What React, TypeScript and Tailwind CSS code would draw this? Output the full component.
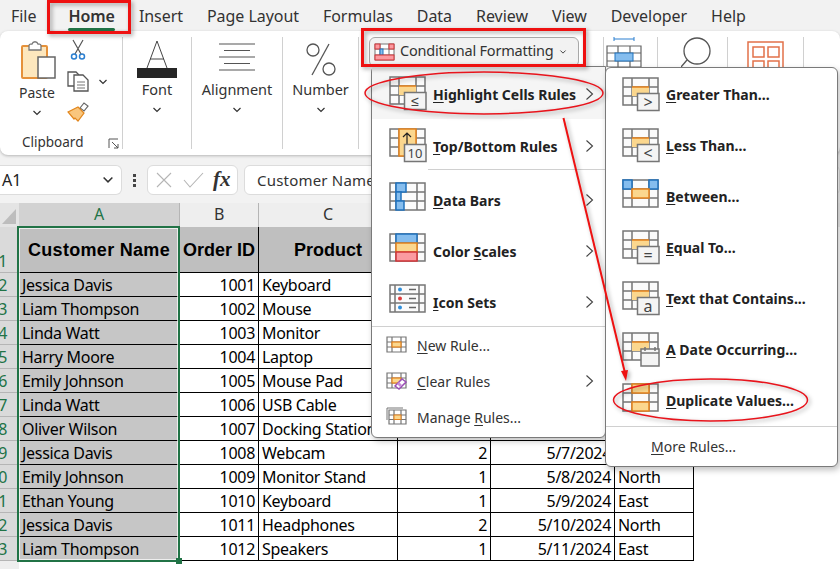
import * as React from "react";

const UI = "font-['Noto_Sans',sans-serif]";
const CELL = "font-['Noto_Sans',sans-serif] tracking-[-0.3px]";

const GREY = "#767676";
const OR_F = "#fbd78e";
const OR_S = "#e5821c";
const BL_F = "#85bdee";
const BL_S = "#1f72bd";
const RD_F = "#fb9aa0";
const RD_S = "#d13438";

const tabs = ["File", "Home", "Insert", "Page Layout", "Formulas", "Data", "Review", "View", "Developer", "Help"];

const rows = [
  ["Jessica Davis", "1001", "Keyboard", "", "", ""],
  ["Liam Thompson", "1002", "Mouse", "", "", ""],
  ["Linda Watt", "1003", "Monitor", "", "", ""],
  ["Harry Moore", "1004", "Laptop", "", "", ""],
  ["Emily Johnson", "1005", "Mouse Pad", "", "", ""],
  ["Linda Watt", "1006", "USB Cable", "", "", ""],
  ["Oliver Wilson", "1007", "Docking Station", "", "", ""],
  ["Jessica Davis", "1008", "Webcam", "2", "5/7/2024", ""],
  ["Emily Johnson", "1009", "Monitor Stand", "1", "5/8/2024", "North"],
  ["Ethan Young", "1010", "Keyboard", "1", "5/9/2024", "East"],
  ["Jessica Davis", "1011", "Headphones", "2", "5/10/2024", "North"],
  ["Liam Thompson", "1012", "Speakers", "1", "5/11/2024", "East"],
];

function Chevron({ className = "" }: { className?: string }) {
  return (
    <svg width="10" height="6" viewBox="0 0 10 6" className={className}>
      <path d="M1.5 1l3.5 3.5L8.500 1" fill="none" stroke="#333" strokeWidth="1.2" />
    </svg>
  );
}

function Arrow() {
  return (
    <svg width="9" height="14" viewBox="0 0 9 14" className="ml-auto shrink-0">
      <path d="M1.500 1.500L7.500 7l-6 5.500" fill="none" stroke="#444" strokeWidth="1.1" />
    </svg>
  );
}

// base 35x27 sheet grid used by every rule icon
function Lines({ a = 10, b = 27 }: { a?: number; b?: number }) {
  return (
    <path
      d={`M1 1h35v27H1zM${a} 1v27M${b} 1v27M1 10h35M1 19h35`}
      fill="#fbfbfb"
      stroke={GREY}
      strokeWidth="1.5"
    />
  );
}

function Cell({ x, y, w, h, fill, stroke }: { x: number; y: number; w: number; h: number; fill: string; stroke: string }) {
  return <rect x={x} y={y} width={w} height={h} fill={fill} stroke={stroke} strokeWidth="1.5" />;
}

function Mid() {
  return (
    <>
      <rect x="10" y="10" width="17" height="9" fill={OR_F} />
      <path d="M10 10h17" stroke={OR_S} strokeWidth="1.5" />
    </>
  );
}

function Box() {
  return <rect x="15.500" y="16.500" width="21.500" height="17" fill="#f4f4f4" stroke={GREY} strokeWidth="1.5" />;
}

function RuleIcon({ kind }: { kind: string }) {
  let body: React.ReactNode = null;
  const txt = (s: string, size = 14, y = 30) => (
    <text x="26" y={y} textAnchor="middle" fontSize={size} fontWeight="400" fill="#444" fontFamily="Noto Sans, sans-serif">
      {s}
    </text>
  );
  if (kind === "highlight") body = <><Lines /><Mid /><Box />{txt("≤", 14, 30)}</>;
  if (kind === "greater") body = <><Lines /><Mid /><Box />{txt(">", 16, 31)}</>;
  if (kind === "less") body = <><Lines /><Mid /><Box />{txt("<", 16, 31)}</>;
  if (kind === "equal") body = <><Lines /><Mid /><Box />{txt("=", 16, 31)}</>;
  if (kind === "text") body = <><Lines /><Mid /><Box />{txt("a", 16, 31)}</>;
  if (kind === "top")
    body = (
      <>
        <Lines />
        <Cell x={10} y={1} w={17} h={27} fill={OR_F} stroke={OR_S} />
        <path d="M18 17V5M14 9l4-4 4 4" fill="none" stroke="#222" strokeWidth="1.2" />
        <Box />
        {txt("10", 13, 30)}
      </>
    );
  if (kind === "bars")
    body = (
      <>
        <Lines a={7} b={28} />
        <Cell x={7} y={1} w={10} h={9} fill={BL_F} stroke={BL_S} />
        <Cell x={7} y={10} w={5} h={9} fill={BL_F} stroke={BL_S} />
        <Cell x={7} y={19} w={8} h={9} fill={BL_F} stroke={BL_S} />
      </>
    );
  if (kind === "color")
    body = (
      <>
        <Lines a={7} b={28} />
        <Cell x={7} y={1} w={21} h={9} fill={BL_F} stroke={BL_S} />
        <Cell x={7} y={10} w={21} h={9} fill={OR_F} stroke={OR_S} />
        <Cell x={7} y={19} w={21} h={9} fill={RD_F} stroke={RD_S} />
      </>
    );
  if (kind === "icons")
    body = (
      <>
        <Lines a={6} b={30} />
        <circle cx="11" cy="5.500" r="2" fill="#2f8fdc" />
        <circle cx="11" cy="14.500" r="2" fill="#e03b3b" />
        <circle cx="11" cy="23.500" r="2" fill="#2f8fdc" />
        <path d="M20 5.500h7M20 14.500h7M20 23.500h7" stroke="#666" strokeWidth="1.5" />
      </>
    );
  if (kind === "between")
    body = (
      <>
        <Lines />
        <Cell x={1} y={1} w={9} h={9} fill={BL_F} stroke={BL_S} />
        <Cell x={27} y={1} w={9} h={9} fill={BL_F} stroke={BL_S} />
        <Cell x={10} y={10} w={17} h={9} fill={OR_F} stroke={OR_S} />
      </>
    );
  if (kind === "date")
    body = (
      <>
        <Lines />
        <Mid />
        <rect x="19" y="17" width="18" height="17" fill="#f4f4f4" stroke={GREY} strokeWidth="1.5" />
        <path d="M19 21h18M23 15v4M33 15v4" fill="none" stroke={GREY} strokeWidth="1.5" />
      </>
    );
  if (kind === "dup")
    body = (
      <>
        <Lines />
        <Cell x={10} y={1} w={17} h={9} fill={OR_F} stroke={OR_S} />
        <Cell x={10} y={19} w={17} h={9} fill={OR_F} stroke={OR_S} />
      </>
    );
  return (
    <svg width="40" height="36" viewBox="0 0 40 36" className="shrink-0">
      {body}
    </svg>
  );
}

function SmallIcon({ kind }: { kind: string }) {
  return (
    <svg width="22" height="20" viewBox="0 0 22 20" className="shrink-0">
      {kind === "manage" && <path d="M1 13V1h16" fill="none" stroke={GREY} strokeWidth="1" />}
      <path
        d={kind === "manage" ? "M3 3h17v14H3zM8 3v14M15 3v14M3 8h17M3 12.500h17" : "M1 2h19v15H1zM6 2v15M15 2v15M1 7h19M1 12h19"}
        fill="none"
        stroke={GREY}
        strokeWidth="1.200"
      />
      {kind === "new" && <rect x="6" y="7" width="9" height="5" fill={OR_F} stroke={OR_S} strokeWidth="1.200" />}
      {kind === "manage" && <rect x="8" y="8" width="7" height="4.500" fill={OR_F} stroke={OR_S} />}
      {kind === "clear" && (
        <>
          <rect x="6" y="7" width="9" height="5" fill={OR_F} stroke={OR_S} strokeWidth="1.200" />
          <path d="M9 15l7-7 4 3-7 7z" fill="#fff" stroke="#9a4fb5" strokeWidth="1.500" />
          <path d="M11 13l3 3 2-2-3-3z" fill="#c58bd8" />
        </>
      )}
    </svg>
  );
}

function Key({ before = "", k, after }: { before?: string; k: string; after: string }) {
  return (
    <span>
      {before}
      <span className="underline underline-offset-2">{k}</span>
      {after}
    </span>
  );
}

function RibbonLabel({ children }: { children: React.ReactNode }) {
  return (
    <div className="-mt-[1px] flex flex-col items-center gap-[8px] text-[14.500px] leading-[20px] text-[#333]">
      <span>{children}</span>
      <Chevron />
    </div>
  );
}

function Ribbon() {
  return (
    <div className="flex h-[124px] rounded-lg bg-white py-[6px] shadow-[0_1px_3px_rgba(0,0,0,0.25)]">
      <div className="relative flex w-[123px] shrink-0 border-r border-[#d0d0d0]">
        <div className="ml-[18px] flex w-[38px] flex-col items-center">
          <svg width="38" height="40" viewBox="0 0 38 40" className="mt-[3px]">
            <rect x="4" y="6" width="25" height="32" rx="1" fill="#fde7bd" stroke="#e5913a" strokeWidth="2" />
            <path d="M11 6c0-2 1-2 3-2 1-3 5-3 6 0 2 0 3 0 3 2v4H11z" fill="#fff" stroke="#777" strokeWidth="1.300" />
            <rect x="20" y="17" width="17" height="21" fill="#fff" stroke="#666" strokeWidth="1.500" />
          </svg>
          <div className="mt-[3px] flex flex-col items-center gap-[7px] text-[14px] leading-[20px] text-[#333]">
            <span>Paste</span>
            <Chevron />
          </div>
        </div>
        <div className="ml-[11px] flex flex-col">
          <svg width="20" height="22" viewBox="0 0 20 22" className="ml-[1px] mt-[2px]">
            <path d="M5 1l8 14M15 1L7 15" stroke="#555" strokeWidth="1.200" />
            <circle cx="6" cy="17.500" r="2.500" fill="none" stroke="#2b7fd0" strokeWidth="1.500" />
            <circle cx="14" cy="17.500" r="2.500" fill="none" stroke="#2b7fd0" strokeWidth="1.500" />
          </svg>
          <div className="mt-[10px] flex items-center">
            <svg width="22" height="21" viewBox="0 0 22 21">
              <path d="M7 15H1V1h8l3 3" fill="#fff" stroke="#555" strokeWidth="1.300" />
              <path d="M7 4h9l5 5v11H7z" fill="#fff" stroke="#555" strokeWidth="1.300" />
              <path d="M10 11h8M10 14h8M10 17h8" stroke="#777" />
            </svg>
            <Chevron className="ml-[9px]" />
          </div>
          <svg width="22" height="20" viewBox="0 0 22 20" className="mt-[10px]">
            <path d="M13 6l4-5 4 3-4 5z" fill="#fff" stroke="#666" strokeWidth="1.200" />
            <path d="M1 10l10-5 6 6-6 8-3-3-1 1z" fill="#f9c67d" stroke="#e2861c" strokeWidth="1.200" />
          </svg>
        </div>
        <span className="absolute bottom-[-2px] left-[22px] text-[13.500px] leading-[18px] text-[#333]">Clipboard</span>
        <svg width="11" height="11" viewBox="0 0 11 11" className="absolute bottom-0 right-[3px]">
          <path d="M1 10V1h9M4 4l6 6M10 6v4H6" fill="none" stroke="#555" />
        </svg>
      </div>

      <div className="flex w-[69px] shrink-0 flex-col items-center border-r border-[#d0d0d0]">
        <svg width="40" height="41" viewBox="0 0 40 41" className="mt-[2px]">
          <path d="M10 29L20 2l10 27M13 20h14" fill="none" stroke="#444" strokeWidth="1" />
          <rect x="0" y="29" width="40" height="10" fill="#262626" />
        </svg>
        <RibbonLabel>Font</RibbonLabel>
      </div>

      <div className="flex w-[91px] shrink-0 flex-col items-center border-r border-[#d0d0d0]">
        <svg width="36" height="41" viewBox="0 0 36 41" className="mt-[2px]">
          <path d="M0 5h36M5 11.500h26M0 18h36M5 24.500h26M0 31h36" stroke="#555" strokeWidth="1.200" />
        </svg>
        <RibbonLabel>Alignment</RibbonLabel>
      </div>

      <div className="flex w-[76px] shrink-0 flex-col items-center border-r border-[#d0d0d0]">
        <svg width="32" height="41" viewBox="0 0 32 41" className="mt-[2px]">
          <circle cx="8" cy="11" r="6" fill="none" stroke="#555" strokeWidth="1.300" />
          <circle cx="24" cy="30" r="6" fill="none" stroke="#555" strokeWidth="1.300" />
          <path d="M24 5L7 36" stroke="#555" strokeWidth="1.300" />
        </svg>
        <RibbonLabel>Number</RibbonLabel>
      </div>

      <div className="w-[245px] shrink-0 border-r border-[#d0d0d0] pl-[10px]">
        <div className="flex h-[30px] w-[210px] items-center rounded-md border border-[#a8a8a8] bg-[#f2f2f2] pl-[4px]">
          <svg width="21" height="18" viewBox="0 0 21 18" className="shrink-0">
            <path d="M1 1h19v16H1zM6 1v16M15 1v16M1 6h19M1 12h19" fill="#fff" stroke="#777" />
            <rect x="1" y="1" width="5" height="5" fill={RD_F} stroke={RD_S} />
            <rect x="15" y="1" width="5" height="5" fill={RD_F} stroke={RD_S} />
            <rect x="6" y="6" width="3" height="6" fill={BL_F} stroke={BL_S} />
            <rect x="1" y="12" width="19" height="5" fill={RD_F} stroke={RD_S} />
          </svg>
          <span className="ml-[5px] -mt-[2px] whitespace-nowrap text-[14.500px] tracking-[-0.2px] text-[#333]">Conditional Formatting</span>
          <Chevron className="ml-[4px] scale-75" />
        </div>
      </div>

      <div className="w-[54px] shrink-0 border-r border-[#d0d0d0] pl-[2px]">
        <svg width="36" height="30" viewBox="0 0 36 30">
          <path d="M8 2h20M8 0v4M28 0v4" stroke="#2b7fd0" fill="none" />
          <path d="M1 9h34v21H1zM12 9v21M24 9v21M1 16h34M1 24h34" fill="none" stroke="#666" strokeWidth="1.200" />
          <rect x="9" y="16" width="18" height="8" fill={BL_F} stroke={BL_S} />
        </svg>
      </div>

      <div className="w-[70px] shrink-0 border-r border-[#d0d0d0] pl-[23px]">
        <svg width="36" height="32" viewBox="0 0 36 32">
          <circle cx="16" cy="14" r="13" fill="#fff" stroke="#555" strokeWidth="1.300" />
          <path d="M6 23L0 30" stroke="#555" strokeWidth="1.300" />
        </svg>
      </div>

      <div className="w-[76px] shrink-0 border-r border-[#d0d0d0] pl-[19px]">
        <svg width="38" height="30" viewBox="0 0 38 30" className="mt-[4px]">
          <path d="M1 1h35v30H1zM6 6h11v10H6zM21 6h11v10H21zM6 20h11v12H6zM21 20h11v12H21z" fill="none" stroke="#e2714a" strokeWidth="1.500" />
        </svg>
      </div>
    </div>
  );
}

function FormulaBar() {
  return (
    <div className="mt-[10px] flex h-[30px] items-stretch">
      <div className="flex w-[122px] items-center rounded-r-md border border-l-0 border-[#dcdcdc] bg-white pl-[2px] pr-[8px] text-[16px] text-[#222]">
        A1
        <Chevron className="ml-auto scale-125" />
      </div>
      <div className="flex w-[25px] flex-col items-center justify-center gap-[2px]">
        <i className="h-[3px] w-[3px] bg-[#444]" />
        <i className="h-[3px] w-[3px] bg-[#444]" />
        <i className="h-[3px] w-[3px] bg-[#444]" />
      </div>
      <div className="flex w-[91px] items-center rounded-md border border-[#dcdcdc] bg-white pl-[8px]">
        <svg width="16" height="16" viewBox="0 0 16 16">
          <path d="M1 1l14 14M15 1L1 15" stroke="#b5b5b5" strokeWidth="1.100" />
        </svg>
        <svg width="21" height="16" viewBox="0 0 21 16" className="ml-[11px]">
          <path d="M1 8l6 7L20 1" fill="none" stroke="#b5b5b5" strokeWidth="1.100" />
        </svg>
        <span className="ml-[9px] font-['Liberation_Serif',serif] text-[21px] font-bold italic text-[#333]">fx</span>
      </div>
      <div className="ml-[6px] flex flex-1 items-center rounded-md border border-[#dcdcdc] bg-white pl-[12px] text-[15px] tracking-[0.2px] text-[#333]">
        Customer Name
      </div>
    </div>
  );
}

function Sheet() {
  const data = "flex h-[24px] items-center whitespace-nowrap border-b border-r border-black text-[16px] leading-none";
  const rowHead = "flex items-end justify-end overflow-hidden border-b border-[#b5b5b5] bg-[#dadada] pr-[12px] text-[16px] leading-[22px] text-[#217346]";
  const colHead = "flex h-[24px] items-center justify-center border-r border-[#b5b5b5] bg-[#eeeeee] pb-[2px] text-[16px] text-[#333]";
  const head = "flex h-[46px] items-center justify-center whitespace-nowrap border-b border-r border-black bg-[#bfbfbf] pt-[2px] font-['Liberation_Sans',sans-serif] text-[18px] font-bold tracking-normal text-black";
  return (
    <div className="relative mt-[8px] bg-white">
      <div className={`grid grid-cols-[19px_161px_79px_139px_93px_124px_79px_1fr] ${CELL}`}>
        <div className="flex h-[24px] items-end justify-end bg-[#e4e4e4]">
          <svg width="18" height="24" viewBox="0 0 18 24">
            <path d="M15 6v15H1z" fill="#bdbdbd" />
          </svg>
        </div>
        <div className={`${colHead} !bg-[#d2d2d2] !text-[#217346]`}>A</div>
        <div className={colHead}>B</div>
        <div className={colHead}>C</div>
        <div className={colHead} />
        <div className={colHead} />
        <div className={colHead} />
        <div className="bg-[#eeeeee]" />

        <div className={rowHead}>1</div>
        <div className={`${head} !tracking-[0.3px]`}>Customer Name</div>
        <div className={head}>Order ID</div>
        <div className={head}>Product</div>
        <div className={head} />
        <div className={head} />
        <div className={head} />
        <div />

        {rows.map((r, i) => (
          <React.Fragment key={i}>
            <div className={rowHead}>{i + 2}</div>
            <div className={`${data} bg-[#c6c6c6] pl-[3px]`}>{r[0]}</div>
            <div className={`${data} justify-end pr-[3px]`}>{r[1]}</div>
            <div className={`${data} pl-[3px]`}>{r[2]}</div>
            <div className={`${data} justify-end pr-[3px]`}>{r[3]}</div>
            <div className={`${data} justify-end pr-[3px]`}>{r[4]}</div>
            <div className={`${data} pl-[3px]`}>{r[5]}</div>
            <div />
          </React.Fragment>
        ))}
        <div className="h-[10px] bg-[#eeeeee]" />
      </div>
      {/* selection box around column A */}
      <div className="pointer-events-none absolute left-[17px] top-[23px] h-[336px] w-[163px] border-2 border-[#217346] outline outline-1 -outline-offset-3 outline-white/70">
        <i className="absolute bottom-[-4px] right-[-4px] h-[6px] w-[6px] bg-[#217346]" />
      </div>
    </div>
  );
}

function MenuRow({ icon, children, arrow, h, active }: { icon: string; children: React.ReactNode; arrow?: boolean; h: string; active?: boolean }) {
  return (
    <div className={`flex items-center pl-[17px] pr-[11px] text-[14px] font-bold text-[#222] ${h} ${active ? "bg-[#f5f5f5]" : ""}`}>
      <RuleIcon kind={icon} />
      <span className="ml-[4px] whitespace-nowrap">{children}</span>
      {arrow && <Arrow />}
    </div>
  );
}

function SmallRow({ icon, children, arrow }: { icon: string; children: React.ReactNode; arrow?: boolean }) {
  return (
    <div className="flex h-[36px] items-center pl-[14px] pr-[11px] text-[14px] text-[#333]">
      <SmallIcon kind={icon} />
      <span className="ml-[9px] whitespace-nowrap">{children}</span>
      {arrow && <Arrow />}
    </div>
  );
}

function RulesMenu() {
  return (
    <div className="absolute left-[371px] top-[66px] h-[372px] w-[235px] rounded-b-md rounded-tl-md border border-[#7a7a7a] bg-white shadow-[2px_3px_6px_rgba(0,0,0,0.25)]">
      <MenuRow icon="highlight" arrow h="h-[52px] pt-[2px]" active><Key k="H" after="ighlight Cells Rules" /></MenuRow>
      <MenuRow icon="top" arrow h="h-[50px] pt-[4px]"><Key k="T" after="op/Bottom Rules" /></MenuRow>
      <div className="ml-[56px] border-t border-[#d0d0d0]" />
      <MenuRow icon="bars" arrow h="h-[56px] pt-[4px]"><Key k="D" after="ata Bars" /></MenuRow>
      <MenuRow icon="color" arrow h="h-[50px]"><Key before="Color " k="S" after="cales" /></MenuRow>
      <MenuRow icon="icons" arrow h="h-[50px] pt-[2px]"><Key k="I" after="con Sets" /></MenuRow>
      <div className="border-t border-[#d0d0d0]" />
      <div>
        <SmallRow icon="new"><Key k="N" after="ew Rule..." /></SmallRow>
        <SmallRow icon="clear" arrow><Key k="C" after="lear Rules" /></SmallRow>
        <SmallRow icon="manage"><Key before="Manage " k="R" after="ules..." /></SmallRow>
      </div>
    </div>
  );
}

function SubRow({ icon, children }: { icon: string; children: React.ReactNode }) {
  return (
    <div className="flex h-[51px] items-center pl-[16px] text-[14px] font-bold text-[#222]">
      <RuleIcon kind={icon} />
      <span className="ml-[4px] whitespace-nowrap">{children}</span>
    </div>
  );
}

function SubMenu() {
  return (
    <div className="absolute left-[605px] top-[67px] h-[400px] w-[233px] rounded-md border border-[#7a7a7a] bg-white pt-[1px] shadow-[2px_3px_6px_rgba(0,0,0,0.25)]">
      <SubRow icon="greater"><Key k="G" after="reater Than..." /></SubRow>
      <SubRow icon="less"><Key k="L" after="ess Than..." /></SubRow>
      <SubRow icon="between"><Key k="B" after="etween..." /></SubRow>
      <SubRow icon="equal"><Key k="E" after="qual To..." /></SubRow>
      <SubRow icon="text"><Key k="T" after="ext that Contains..." /></SubRow>
      <SubRow icon="date"><Key k="A" after=" Date Occurring..." /></SubRow>
      <SubRow icon="dup"><Key k="D" after="uplicate Values..." /></SubRow>
      <div className="border-t border-[#d0d0d0]" />
      <div className="pl-[45px] pt-[9px] text-[14px] text-[#333]"><Key k="M" after="ore Rules..." /></div>
    </div>
  );
}

function Annotations() {
  return (
    <svg
      width="840"
      height="569"
      viewBox="0 0 840 569"
      className="pointer-events-none absolute left-0 top-0 drop-shadow-[2px_2px_2px_rgba(0,0,0,0.35)]"
    >
      <rect x="48.500" y="1.500" width="81" height="31" fill="none" stroke="#ee1111" strokeWidth="3" />
      <rect x="362.500" y="29.500" width="222" height="36" fill="none" stroke="#ee1111" strokeWidth="3" />
      <ellipse cx="484" cy="93" rx="119" ry="21" fill="none" stroke="#e8141c" strokeWidth="1.500" />
      <ellipse cx="710.500" cy="400" rx="97" ry="21" fill="none" stroke="#e8141c" strokeWidth="1.500" />
      <path d="M563.500 118L625 373" stroke="#ee1111" strokeWidth="2" />
      <path d="M621 371l7-1-2 11z" fill="#ee1111" />
    </svg>
  );
}

export default function App() {
  return (
    <div className={`relative h-[569px] w-[840px] overflow-hidden bg-[#f2f2f2] ${UI}`}>
      <div className="flex h-[31px] items-center gap-[24px] pl-[11px] text-[16px] tracking-[-0.05px] text-[#333]">
        {tabs.map((t, i) => (
          <span key={t} className={`relative whitespace-nowrap ${i === 1 ? "ml-[8px] font-semibold" : ""}`}>
            {t}
            {i === 1 && <i className="absolute bottom-[-3px] left-0 right-0 h-[3px] rounded bg-[#217346]" />}
          </span>
        ))}
      </div>
      <Ribbon />
      <FormulaBar />
      <Sheet />
      <RulesMenu />
      <SubMenu />
      <Annotations />
    </div>
  );
}
